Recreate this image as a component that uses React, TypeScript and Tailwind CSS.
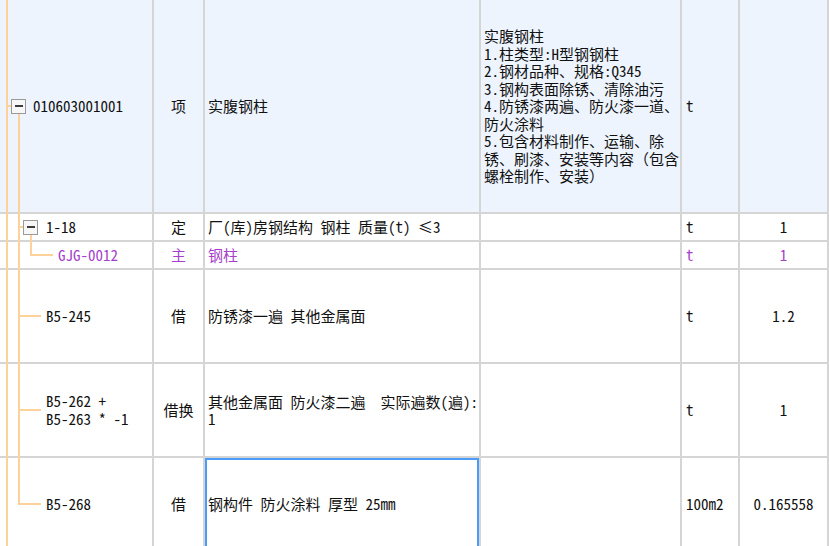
import type { ReactNode } from 'react';

const cell = 'relative flex items-center border-r-2 border-b-2 border-[#d5d5d5]';
const ORANGE = '#fcd29a';

function MinusBox() {
  return (
    <span className="relative z-10 flex h-[15px] w-[15px] shrink-0 items-center justify-center border border-[#9a9a9a] bg-[#f7f7f7]">
      <span className="h-[2px] w-[8px] bg-[#3c3c3c]" />
    </span>
  );
}

// connector lines of the tree, drawn per row; h = content height of the row
type Seg = [number, number, number, number];
function Tree({ h, segs }: { h: number; segs: (c: number, b: number) => Seg[] }) {
  const c = h / 2;
  const b = h + 2;
  return (
    <svg className="pointer-events-none absolute left-0 top-0" width={60} height={b}>
      {segs(c, b).map(([x1, y1, x2, y2], i) => (
        <line key={i} x1={x1} y1={y1} x2={x2} y2={y2} stroke={ORANGE} strokeWidth={2} />
      ))}
    </svg>
  );
}

type Row = {
  h: string;
  bg: string;
  color: string;
  tree: ReactNode;
  type: string;
  name: ReactNode;
  spec?: ReactNode;
  unit: string;
  qty: string;
  selected?: boolean;
};

const specLines = [
  '实腹钢柱',
  '1.柱类型:H型钢钢柱',
  '2.钢材品种、规格:Q345',
  '3.钢构表面除锈、清除油污',
  '4.防锈漆两遍、防火漆一道、',
  '防火涂料',
  '5.包含材料制作、运输、除',
  '锈、刷漆、安装等内容（包含',
  '螺栓制作、安装）',
];

const rows: Row[] = [
  {
    h: 'h-[214px]',
    bg: 'bg-[#edf4fd]',
    color: 'text-[#111]',
    tree: (
      <>
        <Tree h={212} segs={(c, b) => [[7, 0, 7, b], [7, c, 12, c], [19, c, 19, b]]} />
        <span className="flex items-center gap-[7px] pl-[11px]">
          <MinusBox />
          010603001001
        </span>
      </>
    ),
    type: '项',
    name: '实腹钢柱',
    spec: specLines.map((l) => (
      <div key={l} className="whitespace-nowrap">{l}</div>
    )),
    unit: 't',
    qty: '',
  },
  {
    h: 'h-[28px]',
    bg: 'bg-white',
    color: 'text-[#111]',
    tree: (
      <>
        <Tree h={26} segs={(c, b) => [[7, 0, 7, b], [19, 0, 19, b], [19, c, 24, c], [31, c, 31, b]]} />
        <span className="flex items-center gap-[8px] pl-[23px]">
          <MinusBox />
          1-18
        </span>
      </>
    ),
    type: '定',
    name: '厂(库)房钢结构 钢柱 质量(t) ≤3',
    unit: 't',
    qty: '1',
  },
  {
    h: 'h-[28px]',
    bg: 'bg-white',
    color: 'text-[#a63fcb]',
    tree: (
      <>
        <Tree h={26} segs={(c, b) => [[7, 0, 7, b], [19, 0, 19, b], [31, 0, 31, c + 1], [31, c, 53, c]]} />
        <span className="pl-[58px]">GJG-0012</span>
      </>
    ),
    type: '主',
    name: '钢柱',
    unit: 't',
    qty: '1',
  },
  {
    h: 'h-[94px]',
    bg: 'bg-white',
    color: 'text-[#111]',
    tree: (
      <>
        <Tree h={92} segs={(c, b) => [[7, 0, 7, b], [19, 0, 19, b], [19, c, 41, c]]} />
        <span className="pl-[46px]">B5-245</span>
      </>
    ),
    type: '借',
    name: '防锈漆一遍 其他金属面',
    unit: 't',
    qty: '1.2',
  },
  {
    h: 'h-[94px]',
    bg: 'bg-white',
    color: 'text-[#111]',
    tree: (
      <>
        <Tree h={92} segs={(c, b) => [[7, 0, 7, b], [19, 0, 19, b], [19, c, 41, c]]} />
        <span className="whitespace-pre pl-[46px] leading-[18px]">{'B5-262 +\nB5-263 * -1'}</span>
      </>
    ),
    type: '借换',
    name: <span className="whitespace-pre">{'其他金属面 防火漆二遍  实际遍数(遍):\n1'}</span>,
    unit: 't',
    qty: '1',
  },
  {
    h: 'h-[94px]',
    bg: 'bg-white',
    color: 'text-[#111]',
    tree: (
      <>
        <Tree h={92} segs={(c, b) => [[7, 0, 7, b], [19, 0, 19, c + 1], [19, c, 41, c]]} />
        <span className="pl-[46px]">B5-268</span>
      </>
    ),
    type: '借',
    name: '钢构件 防火涂料 厚型 25mm',
    unit: '100m2',
    qty: '0.165558',
    selected: true,
  },
];

export default function App() {
  return (
    <div className="h-[546px] w-[829px] overflow-hidden bg-white font-['Noto_Sans_Mono_CJK_SC','Noto_Sans_CJK_SC',monospace] text-[15px] leading-[17.5px]">
      <div className="grid grid-cols-[154px_51px_276px_201px_58px_89px]">
        {rows.map((r, i) => (
          <div key={i} className={`contents ${r.color}`}>
            <div className={`${cell} ${r.h} ${r.bg}`}>{r.tree}</div>
            <div className={`${cell} ${r.h} ${r.bg} justify-center`}>{r.type}</div>
            <div
              className={`${cell} ${r.h} ${r.bg} pl-[3px] ${
                r.selected ? 'shadow-[inset_0_0_0_2px_#4a9cf8]' : ''
              }`}
            >
              {r.name}
            </div>
            <div className={`${cell} ${r.h} ${r.bg} pl-[3px]`}>
              <div>{r.spec}</div>
            </div>
            <div className={`${cell} ${r.h} ${r.bg} pl-[4px]`}>{r.unit}</div>
            <div className={`${cell} ${r.h} ${r.bg} justify-center`}>{r.qty}</div>
          </div>
        ))}
      </div>
    </div>
  );
}
